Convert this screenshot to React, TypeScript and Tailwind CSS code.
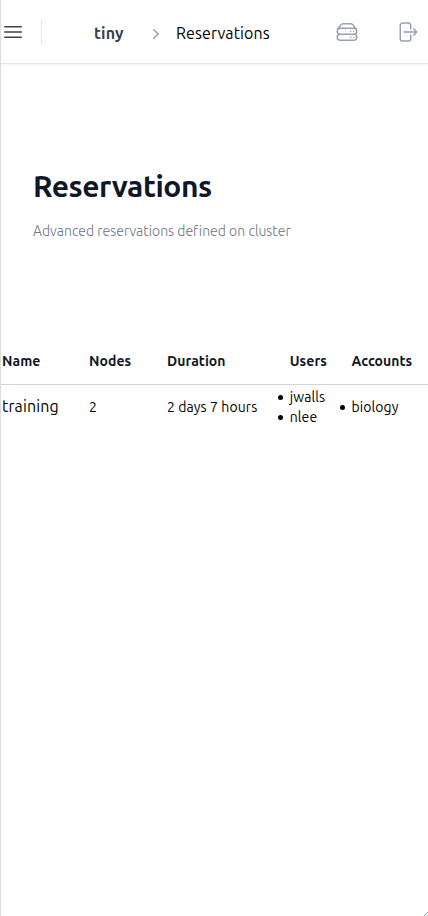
import type { ReactNode } from 'react'

function Icon({ d, className }: { d: string; className: string }) {
  return (
    <svg viewBox="0 0 24 24" fill="none" stroke="currentColor" strokeWidth="1.5" strokeLinecap="round" strokeLinejoin="round" className={`size-6 shrink-0 ${className}`}>
      <path d={d} />
    </svg>
  )
}

const serverPath =
  'M5.25 14.25h13.5m-13.5 0a3 3 0 0 1-3-3m3 3a3 3 0 1 0 0 6h13.5a3 3 0 1 0 0-6m-16.5-3a3 3 0 0 1 3-3h13.5a3 3 0 0 1 3 3m-19.5 0a4.5 4.5 0 0 1 .9-2.7L5.737 5.1a3.375 3.375 0 0 1 2.7-1.35h7.126c1.062 0 2.062.5 2.7 1.35l2.587 3.45a4.5 4.5 0 0 1 .9 2.7m0 0a3 3 0 0 1-3 3m0 3h.008v.008h-.008v-.008Zm0-6h.008v.008h-.008v-.008Zm-3 6h.008v.008h-.008v-.008Zm0-6h.008v.008h-.008v-.008Z'
const logoutPath =
  'M15.75 9V5.25A2.25 2.25 0 0 0 13.5 3h-6a2.25 2.25 0 0 0-2.25 2.25v13.5A2.25 2.25 0 0 0 7.5 21h6a2.25 2.25 0 0 0 2.25-2.25V15m3 0 3-3m0 0-3-3m3 3H9'

function Item({ children }: { children: ReactNode }) {
  return (
    <li className="flex h-5 items-center">
      <span className="mt-px mr-[7px] size-[5px] shrink-0 rounded-full bg-black" />
      {children}
    </li>
  )
}

const columns = 'grid grid-cols-[87px_78px_110.75px_61.75px_1fr] pl-px'

export default function App() {
  return (
    <div className="relative h-[916px] w-[428px] overflow-hidden border-l border-[#dcdcdc] bg-white font-['Ubuntu','Noto_Sans',sans-serif] whitespace-nowrap text-black">
      <header className="flex h-16 items-center border-b border-gray-200 shadow-[0_1px_2px_0_rgb(0_0_0/0.05)]">
        <button aria-label="Open menu" className="text-gray-700">
          <Icon d="M3.75 6.75h16.5M3.75 12h16.5M3.75 17.25h16.5" className="block" />
        </button>
        <div className="ml-4 h-6 w-px bg-gray-200" />
        <nav className="ml-[52px] flex items-center pt-[3px]">
          <span className="w-[54px] text-base font-bold tracking-[0.2px] text-gray-700">tiny</span>
          <svg viewBox="0 0 20 20" fill="currentColor" className="mt-px mr-[10px] size-5 -ml-0.5 text-gray-400">
            <path fillRule="evenodd" clipRule="evenodd" d="M7.21 14.77a.75.75 0 0 1 .02-1.06L11.168 10 7.23 6.29a.75.75 0 1 1 1.04-1.08l4.5 4.25a.75.75 0 0 1 0 1.08l-4.5 4.25a.75.75 0 0 1-1.06-.02Z" />
          </svg>
          <span className="w-[96px] text-base tracking-[0.1px]">Reservations</span>
        </nav>
        <div className="ml-auto flex gap-9 pr-[9px] text-gray-400">
          <Icon d={serverPath} className="" />
          <Icon d={logoutPath} className="" />
        </div>
      </header>

      <main>
        <section className="px-8 pt-[104px]">
          <h1 className="text-3xl leading-9 font-bold tracking-[-0.45px] text-gray-900">Reservations</h1>
          <p className="mt-[15px] text-sm leading-6 font-light tracking-[0.02px] text-gray-500">Advanced reservations defined on cluster</p>
        </section>

        <section className="mt-[94px]">
          <div className={`${columns} h-[48px] items-center border-b border-gray-300 text-sm font-bold tracking-[0.05px] text-gray-900`}>
            <span>Name</span>
            <span>Nodes</span>
            <span>Duration</span>
            <span className="pl-3">Users</span>
            <span className="pl-3">Accounts</span>
          </div>
          <div className={`${columns} items-center pt-[2px] text-sm tracking-[0.08px]`}>
            <span className="-mt-[3px] text-base tracking-[0.13px]">training</span>
            <span>2</span>
            <span>2 days 7 hours</span>
            <ul>
              <Item>jwalls</Item>
              <Item>nlee</Item>
            </ul>
            <ul>
              <Item>biology</Item>
            </ul>
          </div>
        </section>
      </main>
      <svg viewBox="0 0 4 4" className="absolute right-0 bottom-0 size-1 text-gray-400">
        <path d="M0 4 4 0M3 4 4 3" stroke="currentColor" />
      </svg>
    </div>
  )
}
